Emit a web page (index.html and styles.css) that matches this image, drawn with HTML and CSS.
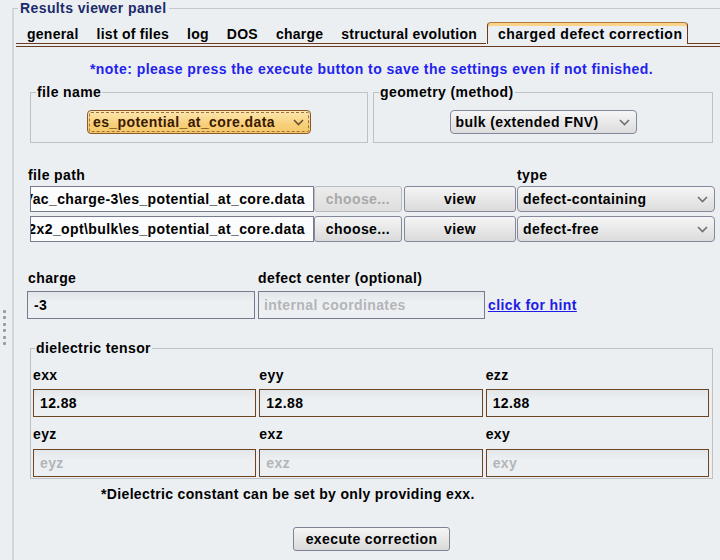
FILE: index.html
```html
<!DOCTYPE html>
<html>
<head>
<meta charset="utf-8">
<link rel="stylesheet" href="styles.css">
</head>
<body>
<div class="gutter">
  <span class="dot"></span><span class="dot"></span><span class="dot"></span>
  <span class="dot"></span><span class="dot"></span><span class="dot"></span>
</div>
<fieldset class="panel">
  <legend class="panel-title">Results viewer panel</legend>
  <div class="tabbar">
    <div class="tabs">
      <span class="tab first">general</span>
      <span class="tab">list of files</span>
      <span class="tab">log</span>
      <span class="tab">DOS</span>
      <span class="tab">charge</span>
      <span class="tab">structural evolution</span>
      <span class="tab active">charged defect correction</span>
      <span class="tab-fill"></span>
    </div>
  </div>
  <div class="content">
    <p class="note">*note: please press the execute button to save the settings even if not finished.</p>

    <div class="groups">
      <fieldset class="group g-file">
        <legend class="group-title">file name</legend>
        <div class="combo combo-orange">
          <span class="combo-text">es_potential_at_core.data</span>
          <svg class="chev" width="11" height="7" viewBox="0 0 11 7"><polyline points="1,1 5.5,5.5 10,1" fill="none" stroke="#6e5030" stroke-width="1.6"/></svg>
        </div>
      </fieldset>
      <fieldset class="group g-geom">
        <legend class="group-title">geometry (method)</legend>
        <div class="combo combo-grey">
          <span class="combo-text">bulk (extended FNV)</span>
          <svg class="chev" width="11" height="7" viewBox="0 0 11 7"><polyline points="1,1 5.5,5.5 10,1" fill="none" stroke="#707070" stroke-width="1.6"/></svg>
        </div>
      </fieldset>
    </div>

    <div class="paths">
      <span class="lbl lbl-path">file path</span>
      <span></span>
      <span></span>
      <span class="lbl lbl-type">type</span>

      <div class="field field-path"><span>C:\work\defect\Vac_charge-3\es_potential_at_core.data</span></div>
      <div class="btn btn-choose disabled">choose...</div>
      <div class="btn btn-view">view</div>
      <div class="combo combo-grey combo-type">
        <span class="combo-text">defect-containing</span>
        <svg class="chev" width="11" height="7" viewBox="0 0 11 7"><polyline points="1,1 5.5,5.5 10,1" fill="none" stroke="#707070" stroke-width="1.6"/></svg>
      </div>

      <div class="field field-path"><span>C:\work\defect\2x2x2_opt\bulk\es_potential_at_core.data</span></div>
      <div class="btn btn-choose">choose...</div>
      <div class="btn btn-view">view</div>
      <div class="combo combo-grey combo-type">
        <span class="combo-text">defect-free</span>
        <svg class="chev" width="11" height="7" viewBox="0 0 11 7"><polyline points="1,1 5.5,5.5 10,1" fill="none" stroke="#707070" stroke-width="1.6"/></svg>
      </div>
    </div>

    <div class="charge">
      <span class="lbl">charge</span>
      <span class="lbl">defect center (optional)</span>
      <span></span>
      <div class="field field-soft">-3</div>
      <div class="field field-soft placeholder">internal coordinates</div>
      <a class="hint" href="#">click for hint</a>
    </div>

    <fieldset class="group g-diel">
      <legend class="group-title">dielectric tensor</legend>
      <div class="tensor">
        <span class="lbl">exx</span><span class="lbl">eyy</span><span class="lbl">ezz</span>
        <div class="field field-brown">12.88</div>
        <div class="field field-brown">12.88</div>
        <div class="field field-brown">12.88</div>
        <span class="lbl lbl-second">eyz</span><span class="lbl lbl-second">exz</span><span class="lbl lbl-second">exy</span>
        <div class="field field-brown placeholder">eyz</div>
        <div class="field field-brown placeholder">exz</div>
        <div class="field field-brown placeholder">exy</div>
      </div>
    </fieldset>

    <p class="footnote">*Dielectric constant can be set by only providing exx.</p>

    <div class="actions">
      <div class="btn btn-exec">execute correction</div>
    </div>
  </div>
</fieldset>
</body>
</html>
```
FILE: styles.css
```css
* { box-sizing: border-box; }
html, body { margin: 0; padding: 0; }
body {
  width: 720px;
  height: 560px;
  overflow: hidden;
  display: flex;
  background: #eceff2;
  color: #000;
  font-family: "Liberation Sans", Arial, sans-serif;
  font-weight: bold;
  font-size: 14px;
  line-height: 16px;
  letter-spacing: 0.4px;
}

/* left drag handle */
.gutter {
  flex: none;
  width: 12px;
  display: flex;
  flex-direction: column;
  align-items: flex-start;
  gap: 3.4px;
  padding: 310px 0 0 3px;
}
.dot {
  width: 3px;
  height: 3px;
  border-radius: 1px;
  background: #969aa3;
}

/* outer titled panel */
.panel {
  flex: 1;
  min-width: 0;
  margin: 0;
  padding: 0;
  border: none;
  border-top: 1px solid #c4c7cb;
  border-left: 2px solid #d3d6da;
}
.panel-title {
  margin-left: 4px;
  padding: 0 2px;
  color: #1b2b6b;
  line-height: 16px;
}

/* tabs */
.tabbar {
  margin: 6px 0 0 2px;
  padding-bottom: 2px;
  border-bottom: 1px solid #6b3a1f;
}
.tabs {
  display: flex;
  align-items: flex-end;
  letter-spacing: 0.25px;
}
.tab {
  height: 22px;
  padding: 4px 9px 1px;
  border-bottom: 1px solid #6b3a1f;
  white-space: nowrap;
}
.tab.first { padding-left: 11px; }
.tab.active {
  margin-left: 1px;
  padding: 3px 5px 2px 10px;
  letter-spacing: 0.5px;
  border: 1px solid #6b3a1f;
  border-top-color: #b07a3a;
  border-bottom: none;
  border-radius: 4px 4px 0 0;
  box-shadow: inset 0 3px 0 #fbd38a;
}
.tab-fill {
  flex: 1;
  height: 22px;
  border-bottom: 1px solid #6b3a1f;
}

/* content */
.content {
  padding: 14px 7px 0 16px;
}
.note {
  margin: 0;
  text-align: center;
  color: #2222ee;
  letter-spacing: 0.45px;
}

.groups {
  display: flex;
  gap: 5px;
  margin-top: 7px;
}
.group {
  margin: 0;
  min-width: 0;
  border: 1px solid #bec1c5;
}
.group-title {
  margin-left: 5px;
  padding: 0 1px;
  line-height: 16px;
}
.g-file, .g-geom {
  padding: 10px 0 8px;
  display: flex;
  justify-content: center;
}
.g-file { width: 338px; }
.g-geom { width: 340px; }

/* combo boxes */
.combo {
  height: 24px;
  display: flex;
  align-items: center;
  justify-content: space-between;
  padding: 0 6px 0 5px;
  border-radius: 4px;
  white-space: nowrap;
}
.combo-orange {
  width: 224px;
  color: #3a1a00;
  background: linear-gradient(#fde7b0, #f8d07a 60%, #f6c968);
  border: 1px solid #8a5a2a;
  outline: 1px dashed #a07040;
  outline-offset: -3px;
}
.combo-grey {
  background: linear-gradient(#f6f6f6, #dcdcdc);
  border: 1px solid #85889a;
}
.g-geom .combo-grey { width: 187px; }
.chev { flex: none; }

/* file path rows */
.paths {
  margin-top: 24px;
  display: grid;
  grid-template-columns: 284px 88px 114px 199px;
  row-gap: 4px;
}
.lbl { white-space: nowrap; }
.lbl-path { margin-left: -2px; margin-bottom: -1px; }
.lbl-type { margin-left: 1px; margin-bottom: -1px; }

.field {
  height: 26px;
  border: 1px solid #787b90;
  display: flex;
  align-items: center;
  white-space: nowrap;
  overflow: hidden;
}
.field-path {
  justify-content: flex-end;
  padding-right: 8px;
  background: #fbfcfd;
}
.btn {
  height: 26px;
  display: flex;
  align-items: center;
  justify-content: center;
  border: 1px solid #85889a;
  border-radius: 3px;
  background: linear-gradient(#f5f5f5, #dadada);
  white-space: nowrap;
}
.btn.disabled {
  color: #a9a9a9;
  border-color: #b9bbc0;
  background: linear-gradient(#ececec, #dedede);
}
.btn-view { margin-left: 2px; }
.combo-type {
  height: 26px;
  margin-left: 1px;
  border-radius: 4px;
}

/* charge row */
.charge {
  margin: 28px 0 0 -3px;
  display: grid;
  grid-template-columns: 228px 227px auto;
  column-gap: 3px;
  row-gap: 5px;
}
.charge .lbl:first-child { margin-left: 1px; }
.field-soft {
  height: 28px;
  padding-left: 6px;
  background: linear-gradient(#e3e6e9, #edf0f3 40%);
  border-color: #767a8e;
}
.field-soft.placeholder { padding-left: 5px; }
.placeholder { color: #b3b5b8; }
.hint {
  align-self: center;
  margin-left: 0;
  color: #1c1ce6;
  text-decoration: underline;
}

/* dielectric tensor */
.g-diel {
  margin-top: 21px;
  width: 683px;
  padding: 11px 3px 1px 2px;
}
.g-diel .group-title { margin-left: 2px; }
.tensor {
  display: grid;
  grid-template-columns: 1fr 1fr 1fr;
  column-gap: 3px;
}
.tensor .lbl { margin-bottom: 6px; }
.tensor .lbl-second { margin-top: 9px; margin-bottom: 7px; }
.field-brown {
  height: 28px;
  padding-left: 6px;
  border-color: #6b4423;
  background: linear-gradient(#e4e7ea, #edf0f3 40%);
}

.footnote {
  margin: 7px 0 0 71px;
  letter-spacing: 0.35px;
}

.actions {
  margin-top: 25px;
  display: flex;
  justify-content: center;
}
.btn-exec {
  width: 157px;
  height: 24px;
  border-color: #7f8294;
}
```
